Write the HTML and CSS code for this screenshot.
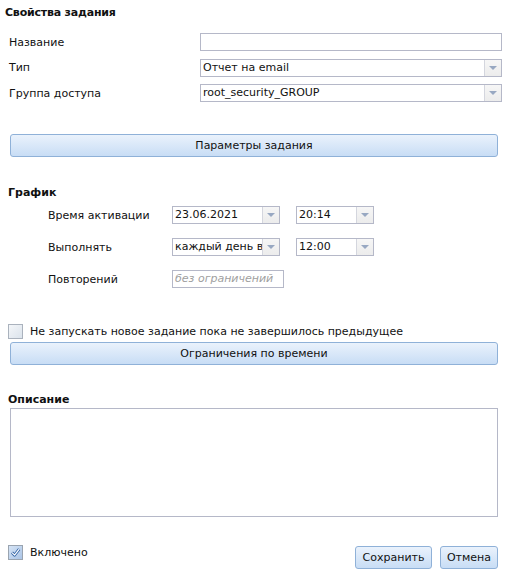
FILE: index.html
```html
<!DOCTYPE html>
<html lang="ru">
<head>
<meta charset="utf-8">
<link rel="stylesheet" href="styles.css">
</head>
<body>
<div class="page">
  <div class="title">Свойства задания</div>

  <div class="form">
    <div class="row">
      <div class="label">Название</div>
      <div class="field wide"><span class="val"></span></div>
    </div>
    <div class="row">
      <div class="label">Тип</div>
      <div class="field wide combo"><span class="val">Отчет на email</span><span class="trigger"><span class="arrow"></span></span></div>
    </div>
    <div class="row">
      <div class="label">Группа доступа</div>
      <div class="field wide combo"><span class="val">root_security_GROUP</span><span class="trigger"><span class="arrow"></span></span></div>
    </div>
  </div>

  <div class="btn-bar params"><span>Параметры задания</span></div>

  <div class="section">График</div>
  <div class="sched">
    <div class="srow">
      <div class="slabel">Время активации</div>
      <div class="field date combo"><span class="val">23.06.2021</span><span class="trigger"><span class="arrow"></span></span></div>
      <div class="field time combo"><span class="val">20:14</span><span class="trigger"><span class="arrow"></span></span></div>
    </div>
    <div class="srow">
      <div class="slabel">Выполнять</div>
      <div class="field date combo"><span class="val">каждый день в</span><span class="trigger"><span class="arrow"></span></span></div>
      <div class="field time combo"><span class="val">12:00</span><span class="trigger"><span class="arrow"></span></span></div>
    </div>
    <div class="srow">
      <div class="slabel">Повторений</div>
      <div class="field repeat"><span class="val hint">без ограничений</span></div>
    </div>
  </div>

  <div class="check-row first">
    <span class="cb"></span>
    <span class="cb-label">Не запускать новое задание пока не завершилось предыдущее</span>
  </div>
  <div class="btn-bar limits"><span>Ограничения по времени</span></div>

  <div class="section desc">Описание</div>
  <div class="textarea"></div>

  <div class="footer">
    <div class="check-row on">
      <span class="cb checked"><svg viewBox="0 0 13 13" width="13" height="13"><path d="M3 6.6 L5.6 9.2 L10.2 3.2" fill="none" stroke="#2f62a6" stroke-width="2.8" stroke-linejoin="round"/><path d="M3 6.6 L5.6 9.2 L10.2 3.2" fill="none" stroke="#ffffff" stroke-width="1.2" stroke-linejoin="round"/></svg></span>
      <span class="cb-label">Включено</span>
    </div>
    <div class="actions">
      <div class="btn save">Сохранить</div>
      <div class="btn cancel">Отмена</div>
    </div>
  </div>
</div>
</body>
</html>
```

FILE: styles.css
```css
html, body {
  margin: 0;
  padding: 0;
  background: #fff;
}
body {
  font-family: "DejaVu Sans", Verdana, sans-serif;
  font-size: 11px;
  color: #111;
}
.page {
  width: 510px;
  height: 581px;
  position: relative;
}
.title {
  font-weight: bold;
  padding: 5px 0 0 5px;
  height: 15px;
  line-height: 15px;
  letter-spacing: -0.2px;
}
.form {
  margin-top: 13px;
  display: flex;
  flex-direction: column;
  gap: 7.5px;
}
.row {
  display: flex;
  align-items: center;
  height: 18px;
}
.label {
  width: 191px;
  padding-left: 9px;
}
.field {
  box-sizing: border-box;
  height: 18px;
  border: 1px solid #b5b8c8;
  background: #fff;
  display: flex;
  align-items: center;
  position: relative;
}
.field .val {
  flex: 1;
  padding-left: 2px;
  white-space: nowrap;
  overflow: hidden;
  line-height: 16px;
}
.field.wide {
  width: 302px;
}
.trigger {
  width: 17px;
  height: 16px;
  box-sizing: border-box;
  border-left: 1px solid #d4d6de;
  background: linear-gradient(#f6f6f6, #ececec);
  display: flex;
  align-items: center;
  justify-content: center;
}
.arrow {
  width: 0;
  height: 0;
  border-left: 4px solid transparent;
  border-right: 4px solid transparent;
  border-top: 4px solid #98a8c2;
}
.btn-bar {
  box-sizing: border-box;
  margin-left: 10px;
  width: 488px;
  height: 23px;
  border: 1px solid #8fb1d8;
  border-radius: 3px;
  background: linear-gradient(#eaf2fc, #c8ddf5);
  display: flex;
  align-items: center;
  justify-content: center;
}
.params {
  margin-top: 32px;
}
.section {
  font-weight: bold;
  padding-left: 8px;
  height: 15px;
  line-height: 15px;
  margin-top: 28px;
}
.sched {
  margin-top: 6px;
  display: flex;
  flex-direction: column;
  gap: 14px;
}
.srow {
  display: flex;
  align-items: center;
  height: 18px;
}
.slabel {
  width: 124px;
  padding-left: 48px;
}
.field.date {
  width: 108px;
}
.field.time {
  width: 78px;
  margin-left: 16px;
}
.field.repeat {
  width: 112px;
}
.hint {
  color: #a0a0a0;
  font-style: italic;
}
.check-row {
  display: flex;
  align-items: center;
  gap: 7px;
  padding-left: 8px;
  height: 15px;
}
.check-row.first {
  margin-top: 36px;
}
.cb {
  box-sizing: border-box;
  width: 15px;
  height: 15px;
  border: 1px solid #aab2bd;
  background: linear-gradient(135deg, #f4f6f9, #dbe3ec);
  display: block;
}
.cb.checked {
  border-color: #9aa4b0;
  background: linear-gradient(135deg, #d6e4f5, #aac4e6);
}
.cb svg {
  display: block;
}
.limits {
  margin-top: 3px;
}
.desc {
  margin-top: 27px;
}
.textarea {
  box-sizing: border-box;
  margin: 1px 0 0 10px;
  width: 488px;
  height: 109px;
  border: 1px solid #b5b8c8;
}
.footer {
  margin-top: 28px;
  display: flex;
  align-items: flex-start;
  justify-content: space-between;
  padding-right: 12px;
}
.actions {
  display: flex;
  gap: 8px;
  margin-top: 1px;
}
.btn {
  box-sizing: border-box;
  height: 23px;
  border: 1px solid #8fb1d8;
  border-radius: 3px;
  background: linear-gradient(#eaf2fc, #c8ddf5);
  display: flex;
  align-items: center;
  justify-content: center;
}
.btn.save {
  width: 77px;
}
.btn.cancel {
  width: 58px;
}
```
